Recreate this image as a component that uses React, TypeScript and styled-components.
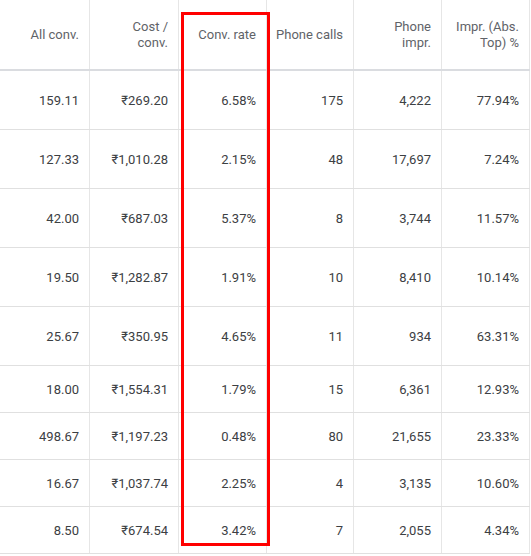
import styled, { createGlobalStyle } from "styled-components";

type RowData = {
    cells: string[]
    compact?: boolean
}

const headers = [
    ["All conv."],
    ["Cost /", "conv."],
    ["Conv. rate"],
    ["Phone calls"],
    ["Phone", "impr."],
    ["Impr. (Abs.", "Top) %"],
]

const rows: RowData[] = [
    { cells: ["159.11", "₹269.20", "6.58%", "175", "4,222", "77.94%"] },
    { cells: ["127.33", "₹1,010.28", "2.15%", "48", "17,697", "7.24%"] },
    { cells: ["42.00", "₹687.03", "5.37%", "8", "3,744", "11.57%"] },
    { cells: ["19.50", "₹1,282.87", "1.91%", "10", "8,410", "10.14%"] },
    { cells: ["25.67", "₹350.95", "4.65%", "11", "934", "63.31%"] },
    { cells: ["18.00", "₹1,554.31", "1.79%", "15", "6,361", "12.93%"], compact: true },
    { cells: ["498.67", "₹1,197.23", "0.48%", "80", "21,655", "23.33%"], compact: true },
    { cells: ["16.67", "₹1,037.74", "2.25%", "4", "3,135", "10.60%"], compact: true },
    { cells: ["8.50", "₹674.54", "3.42%", "7", "2,055", "4.34%"], compact: true },
]

export default function App() {
    return (
        <>
            <GlobalStyle />
            <Page>
                <Table>
                    <HeaderRow>
                        {headers.map((lines, i) => (
                            <HeaderCell key={i}>
                                <span>
                                    {lines.map((line, j) => (
                                        <span key={j}>
                                            {j > 0 && <br />}
                                            {line}
                                        </span>
                                    ))}
                                </span>
                            </HeaderCell>
                        ))}
                    </HeaderRow>
                    {rows.map((row, i) => (
                        <Row key={i} $compact={row.compact}>
                            {row.cells.map((value, j) => (
                                <Cell key={j}>{value}</Cell>
                            ))}
                        </Row>
                    ))}
                </Table>
                <Highlight />
            </Page>
        </>
    );
}

const GlobalStyle = createGlobalStyle`
    html, body {
        margin: 0;
        padding: 0;
        background: #ffffff;
    }
    body {
        font-family: Roboto, "Liberation Sans", sans-serif;
    }
`

const Page = styled.div`
    position: relative;
    width: 531px;
    height: 556px;
    overflow: hidden;
    background: #ffffff;
`

const Table = styled.div`
    display: flex;
    flex-direction: column;
    width: 530px;
`

const columns = "90px 89px 88px 87px 88px 88px"

const HeaderRow = styled.div`
    display: grid;
    grid-template-columns: ${columns};
    height: 71px;
    border-bottom: 2px solid #dadce0;
    box-sizing: border-box;
`

const HeaderCell = styled.div`
    display: flex;
    align-items: center;
    justify-content: flex-end;
    padding: 0 10px 0 8px;
    border-right: 1px solid #e6e6e6;
    font-size: 13px;
    line-height: 16px;
    color: #5f6368;
    text-align: right;
    white-space: nowrap;
`

const Row = styled.div<{ $compact?: boolean }>`
    display: grid;
    grid-template-columns: ${columns};
    height: ${(p) => (p.$compact ? "47px" : "59px")};
    border-bottom: 1px solid #e0e0e0;
    box-sizing: border-box;
`

const Cell = styled.div`
    display: flex;
    align-items: center;
    justify-content: flex-end;
    padding: 0 10px 0 8px;
    border-right: 1px solid #e6e6e6;
    font-size: 13px;
    color: #3c4043;
    white-space: nowrap;
`

const Highlight = styled.div`
    position: absolute;
    left: 181px;
    top: 12px;
    width: 89px;
    height: 534px;
    border: 3px solid #ff0000;
    box-sizing: border-box;
    pointer-events: none;
`
